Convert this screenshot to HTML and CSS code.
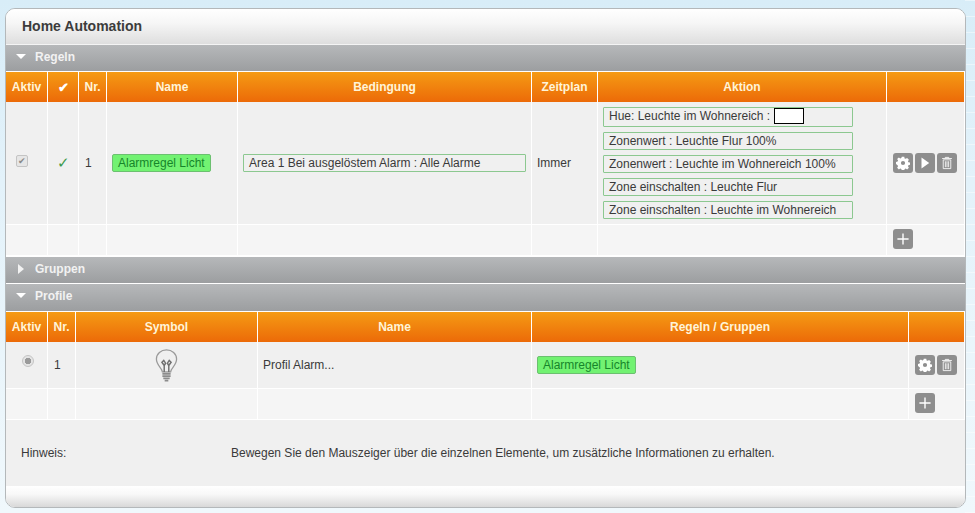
FILE: index.html
```html
<!DOCTYPE html>
<html lang="de">
<head>
<meta charset="utf-8">
<title>Home Automation</title>
<link rel="stylesheet" href="styles.css">
</head>
<body>
<svg class="defs" width="0" height="0" aria-hidden="true">
  <symbol id="i-gear" viewBox="0 0 20 20"><path fill="#fff" fill-rule="evenodd" d="M8.200 1h3.600l.5 2.400 1.500.7 2.100-1.300 2.500 2.500-1.300 2.100.6 1.500 2.300.5v3.200l-2.300.5-.6 1.500 1.300 2.100-2.500 2.500-2.100-1.300-1.500.6-.5 2.400H8.200l-.5-2.400-1.500-.6-2.100 1.300-2.500-2.500 1.300-2.100-.6-1.500L0 11.600V8.400l2.300-.5.6-1.500-1.300-2.100L4.100 2.300l2.100 1.300 1.500-.7zM10 7a3 3 0 1 0 0 6 3 3 0 0 0 0-6z"/></symbol>
  <symbol id="i-play" viewBox="0 0 20 20"><path fill="#fff" d="M5 2 16 10 5 18z"/></symbol>
  <symbol id="i-trash" viewBox="0 0 20 20"><path fill="none" stroke="#fff" stroke-width="1.200" d="M4.600 5.500h10.800v12.500H4.600zM3 3.600h14M7.500 3.500V2h5v1.500M7.700 7.500v8.500M10 7.500v8.500M12.300 7.500v8.500"/></symbol>
  <symbol id="i-plus" viewBox="0 0 20 20"><path fill="none" stroke="#fff" stroke-width="2" d="M10 2v16M2 10h16"/></symbol>
</svg>
<main class="panel">
  <header class="panel-head">Home Automation</header>

  <div class="bar"><span class="tri tri-down"></span>Regeln</div>
  <table class="grid rules">
    <colgroup>
      <col class="c41"><col class="c31"><col class="c28"><col class="c131"><col class="c294"><col class="c66"><col class="c289"><col>
    </colgroup>
    <thead>
      <tr><th>Aktiv</th><th class="th-check">&#10004;</th><th>Nr.</th><th>Name</th><th>Bedingung</th><th>Zeitplan</th><th>Aktion</th><th></th></tr>
    </thead>
    <tbody>
      <tr class="rule-row">
        <td class="pad-check"><span class="fake-check">&#10004;</span></td>
        <td class="center ok">&#10003;</td>
        <td class="pad-num">1</td>
        <td class="pad"><span class="tag">Alarmregel Licht</span></td>
        <td class="pad"><div class="chip chip-cond">Area 1 Bei ausgelöstem Alarm : Alle Alarme</div></td>
        <td class="pad">Immer</td>
        <td class="pad actions">
          <div class="chip chip-hue">Hue: Leuchte im Wohnereich : <span class="swatch"></span></div>
          <div class="chip">Zonenwert : Leuchte Flur 100%</div>
          <div class="chip">Zonenwert : Leuchte im Wohnereich 100%</div>
          <div class="chip">Zone einschalten : Leuchte Flur</div>
          <div class="chip">Zone einschalten : Leuchte im Wohnereich</div>
        </td>
        <td class="btn-cell">
          <div class="btns">
            <span class="btn"><svg><use href="#i-gear"/></svg></span>
            <span class="btn"><svg><use href="#i-play"/></svg></span>
            <span class="btn"><svg><use href="#i-trash"/></svg></span>
          </div>
        </td>
      </tr>
      <tr class="add-row">
        <td></td><td></td><td></td><td></td><td></td><td></td><td></td>
        <td class="btn-cell"><div class="btns"><span class="btn"><svg><use href="#i-plus"/></svg></span></div></td>
      </tr>
    </tbody>
  </table>

  <div class="bar bar-gap"><span class="tri tri-right"></span>Gruppen</div>
  <div class="bar bar-gap bar-tall"><span class="tri tri-down"></span>Profile</div>
  <table class="grid profiles">
    <colgroup>
      <col class="c41"><col class="c28"><col class="c182"><col class="c274"><col class="c377"><col>
    </colgroup>
    <thead>
      <tr><th>Aktiv</th><th>Nr.</th><th>Symbol</th><th>Name</th><th>Regeln / Gruppen</th><th></th></tr>
    </thead>
    <tbody>
      <tr class="profile-row">
        <td class="pad-radio"><span class="fake-radio"></span></td>
        <td class="pad-num">1</td>
        <td class="center">
          <svg class="bulb" viewBox="0 0 24 36" aria-hidden="true">
            <path fill="none" stroke="#9a9a9a" stroke-width="1.400" d="M7.500 25c0-4-6.500-7-6.500-14C1 5 6 1 12 1s11 4 11 10c0 7-6.500 10-6.500 14z"/>
            <path fill="none" stroke="#707070" stroke-width="1.600" d="M9.500 25v-7l-2.500-3.500 2-2 2 3-1.500 2.500M14.500 25v-7l2.500-3.500-2-2-2 3 1.500 2.500"/>
            <path fill="none" stroke="#8c8c8c" stroke-width="2" d="M7.500 27h9M7.500 29.500h9M8.500 32h7M10 34.500h4"/>
          </svg>
        </td>
        <td class="pad">Profil Alarm...</td>
        <td class="pad"><span class="tag">Alarmregel Licht</span></td>
        <td class="btn-cell">
          <div class="btns">
            <span class="btn"><svg><use href="#i-gear"/></svg></span>
            <span class="btn"><svg><use href="#i-trash"/></svg></span>
          </div>
        </td>
      </tr>
      <tr class="add-row add-row-p">
        <td></td><td></td><td></td><td></td><td></td>
        <td class="btn-cell"><div class="btns"><span class="btn"><svg><use href="#i-plus"/></svg></span></div></td>
      </tr>
    </tbody>
  </table>

  <section class="hint">
    <span class="hint-label">Hinweis:</span>
    <span>Bewegen Sie den Mauszeiger über die einzelnen Elemente, um zusätzliche Informationen zu erhalten.</span>
  </section>
  <footer class="panel-foot"></footer>
</main>
</body>
</html>
```
FILE: styles.css
```css
* { box-sizing: border-box; }
html, body { height: 100%; }
body {
  margin: 0;
  padding: 8px 9px 0 5px;
  overflow: hidden;
  font-family: "Liberation Sans", Arial, sans-serif;
  font-size: 12px;
  color: #3a3a3a;
  background:
    repeating-linear-gradient(180deg, rgba(255,255,255,.45) 0 1px, transparent 1px 16px) right top / 10px 100% no-repeat,
    linear-gradient(180deg, #d8edf8 0, #e3f2fa 35%, #f0f8fc 100%);
}
.defs { position: absolute; }
.panel {
  width: 961px;
  height: 500px;
  border: 1px solid #b4b8ba;
  border-radius: 10px;
  overflow: hidden;
  background: #fff;
}
.panel-head {
  height: 36px;
  padding: 9px 0 0 16px;
  font-size: 14px;
  font-weight: bold;
  color: #3c3c3c;
  background: linear-gradient(180deg, #fff 0, #f6f6f6 40%, #dedede 100%);
  border-bottom: 1px solid #f4f4f4;
}
.bar {
  height: 26px;
  padding: 5px 0 0 29px;
  position: relative;
  font-weight: bold;
  color: #f2f2f2;
  background: linear-gradient(180deg, #b6b8ba 0, #9c9ea0 100%);
}
.bar-gap { margin-top: 1px; }
.bar-tall { height: 27px; }
.tri { position: absolute; left: 10px; width: 0; height: 0; }
.tri-down { top: 9px; border-left: 5px solid transparent; border-right: 5px solid transparent; border-top: 5px solid #fff; }
.tri-right { top: 7px; left: 12px; border-top: 5px solid transparent; border-bottom: 5px solid transparent; border-left: 6px solid #f2f2f2; }

.grid {
  width: 958px;
  table-layout: fixed;
  border-collapse: separate;
  border-spacing: 0;
}
.c41 { width: 41px; } .c31 { width: 31px; } .c28 { width: 28px; }
.c131 { width: 131px; } .c294 { width: 294px; } .c66 { width: 66px; }
.c289 { width: 289px; } .c182 { width: 182px; } .c274 { width: 274px; } .c377 { width: 377px; }

.grid th {
  height: 31px;
  padding: 0;
  border-left: 1px solid #fff;
  border-top: 1px solid #fff;
  font-size: 12px;
  font-weight: bold;
  color: #fff4d8;
  background: linear-gradient(180deg, #f59b14 0, #ec6a08 100%);
}
.grid th:first-child { border-left: 0; }
.grid .th-check { color: #fff; font-size: 13px; }
.grid td {
  padding: 0;
  background: #f0f0f0;
  border-left: 1px solid #fff;
  border-bottom: 1px solid #fff;
  vertical-align: middle;
}
.grid td:first-child { border-left: 0; }
.center { text-align: center; }
.grid .pad { padding-left: 5px; }
.grid .pad-num { padding-left: 6px; }
.grid .pad-check { padding-left: 10px; }
.grid .pad-radio { padding-left: 16px; }
.ok { color: #3c9a4c; font-size: 15px; }

.rule-row td { height: 123px; }
.grid .add-row td { height: 31px; background: #f5f5f5; vertical-align: top; }
.grid .add-row .btn-cell { padding-top: 4px; }
.profile-row td { height: 47px; }

.fake-check {
  display: inline-block;
  width: 12px;
  height: 12px;
  line-height: 11px;
  border: 1px solid #c4c4c4;
  border-radius: 2px;
  background: #e6e6e6;
  color: #8a8a8a;
  font-size: 9px;
  text-align: center;
  vertical-align: 5px;
}
.fake-radio {
  display: inline-block;
  width: 12px;
  height: 12px;
  border: 1px solid #c4c4c4;
  border-radius: 50%;
  background: radial-gradient(circle, #9a9a9a 0 3px, #e4e4e4 3.500px);
  vertical-align: 5px;
}
.tag {
  display: inline-block;
  height: 18px;
  line-height: 16px;
  padding: 0 5px;
  border: 1px solid #6cc070;
  border-radius: 2px;
  background: #72f272;
  color: #16852a;
}
.chip {
  height: 18px;
  line-height: 16px;
  padding: 0 5px;
  border: 1px solid #8cc890;
  border-radius: 1px;
  width: 250px;
  white-space: nowrap;
}
.chip-cond { width: 283px; }
.chip-hue { height: 20px; display: flex; align-items: flex-start; }
.actions .chip:not(:last-child) { margin-bottom: 5px; }
.swatch {
  width: 30px;
  height: 16px;
  margin-left: 4px;
  border: 1px solid #000;
  background: #fff;
}
.btns { display: flex; justify-content: flex-end; gap: 2px; padding-right: 7px; }
.add-row .btns { justify-content: flex-start; padding-left: 6px; }
.btn {
  width: 20px;
  height: 20px;
  border-radius: 3px;
  background: #8e8e8e;
  display: flex;
}
.btn svg { width: 20px; height: 20px; padding: 3px; }
.bulb { display: block; width: 23px; height: 33px; margin: 0 auto; }
.hint {
  height: 66px;
  display: flex;
  align-items: center;
  padding: 0 0 0 15px;
  background: #f0f0f0;
}
.hint-label { width: 210px; }
.panel-foot {
  height: 21px;
  background: linear-gradient(180deg, #fff 0, #f8f8f8 40%, #d8d8d8 100%);
}
```
